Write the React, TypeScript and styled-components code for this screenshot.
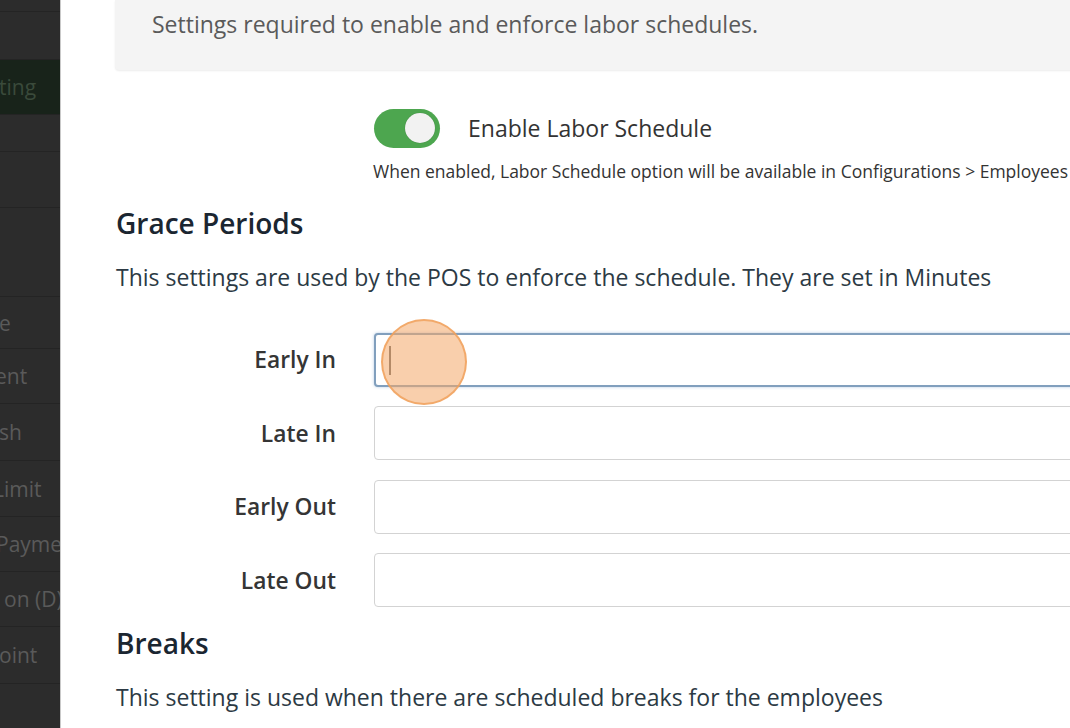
import React from "react";
import styled, { createGlobalStyle } from "styled-components";

const Global = createGlobalStyle`
  html, body { margin: 0; padding: 0; background: #fff; overflow: hidden; }
  body { font-family: "Open Sans", "Noto Sans", Arial, sans-serif; }
  * { box-sizing: border-box; }
`;

const Page = styled.div`
  display: flex;
  width: 1070px;
  height: 728px;
  overflow: hidden;
`;

const Sidebar = styled.nav`
  flex: 0 0 61px;
  width: 61px;
  height: 100%;
  background: #2c2c2c;
  border-right: 1px solid #c9c9c9;
  overflow: hidden;
`;

const SideList = styled.ul`
  list-style: none;
  margin: 0;
  padding: 0;
  display: flex;
  flex-direction: column;
`;

const SideItem = styled.li<{ $h: number; $active?: boolean }>`
  height: ${(p) => p.$h}px;
  display: flex;
  align-items: center;
  padding-left: 0;
  border-bottom: 1px solid #242424;
  background: ${(p) => (p.$active ? "#18231a" : "transparent")};
  color: ${(p) => (p.$active ? "#3a4a3b" : "#5a5a5a")};
  font-size: 21px;
  white-space: nowrap;
  overflow: hidden;
`;

const SideText = styled.span<{ $shift: number }>`
  display: inline-block;
  margin-left: ${(p) => p.$shift}px;
`;

const Main = styled.main`
  flex: 1 1 auto;
  height: 100%;
  overflow: hidden;
  padding-left: 54px;
`;

const Inner = styled.div`
  width: 1000px;
  display: flex;
  flex-direction: column;
`;

const InfoPanel = styled.div`
  background: #f4f4f4;
  border-bottom-left-radius: 4px;
  box-shadow: 0 1px 2px rgba(0, 0, 0, 0.08);
  padding: 9px 0 31px 37px;
  color: #5a5a5a;
  font-size: 23px;
  line-height: 30px;
  white-space: nowrap;
`;

const FormGrid = styled.div<{ $top: number }>`
  display: grid;
  grid-template-columns: 221px 1fr;
  column-gap: 38px;
  row-gap: 19.5px;
  margin-top: ${(p) => p.$top}px;
`;

const ToggleRow = styled.div`
  grid-column: 2;
  display: flex;
  align-items: center;
  gap: 28px;
  height: 40px;
`;

const Switch = styled.div<{ $on: boolean }>`
  width: 66px;
  height: 39px;
  border-radius: 20px;
  background: ${(p) => (p.$on ? "#4da64f" : "#ccc")};
  display: flex;
  align-items: center;
  justify-content: ${(p) => (p.$on ? "flex-end" : "flex-start")};
  padding: 0 5px;
`;

const Knob = styled.span`
  width: 30px;
  height: 30px;
  border-radius: 50%;
  background: #f2f2f2;
  box-shadow: 0 0 1px rgba(0, 0, 0, 0.3);
`;

const ToggleLabel = styled.span`
  font-size: 23px;
  color: #333;
`;

const Help = styled.div`
  grid-column: 2;
  margin-top: -8px;
  margin-left: -1px;
  font-size: 17.5px;
  line-height: 22px;
  color: #333;
  white-space: nowrap;
`;

const Heading = styled.h2<{ $top: number }>`
  margin: ${(p) => p.$top}px 0 0 1px;
  font-size: 28px;
  font-weight: 600;
  color: #1b2631;
  line-height: 36px;
`;

const Para = styled.p<{ $top: number }>`
  margin: ${(p) => p.$top}px 0 0 1px;
  font-size: 23px;
  line-height: 30px;
  color: #2c3a44;
  white-space: nowrap;
`;

const FieldRow = styled.div`
  display: contents;
`;

const Label = styled.label`
  text-align: right;
  align-self: center;
  font-size: 22.8px;
  font-weight: 600;
  color: #353535;
`;

const InputWrap = styled.div`
  position: relative;
  height: 54px;
`;

const Input = styled.input<{ $focus?: boolean }>`
  width: 100%;
  height: 100%;
  border-radius: 4px;
  border: ${(p) => (p.$focus ? "2px solid #819fbd" : "1px solid #d3d3d3")};
  box-shadow: ${(p) => (p.$focus ? "0 0 3px rgba(102, 150, 200, 0.5)" : "none")};
  background: #fff;
  font-size: 20px;
  padding: 0 15px;
  outline: none;
`;

const Caret = styled.span`
  position: absolute;
  left: 15px;
  top: 13px;
  width: 2px;
  height: 29px;
  background: #666;
`;

const ClickMark = styled.span`
  position: absolute;
  left: 7px;
  top: 50%;
  width: 86px;
  height: 86px;
  margin-top: -41px;
  border-radius: 50%;
  background: rgba(244, 168, 104, 0.55);
  border: 2px solid rgba(240, 160, 90, 0.8);
`;

const sideItems: { h: number; text: string; shift: number; active?: boolean }[] = [
  { h: 12, text: "", shift: 0 },
  { h: 48, text: "", shift: 0 },
  { h: 55, text: "ting", shift: -1, active: true },
  { h: 37, text: "", shift: 0 },
  { h: 56, text: "", shift: 0 },
  { h: 89, text: "", shift: 0 },
  { h: 52, text: "e", shift: -1 },
  { h: 55, text: "ent", shift: -5 },
  { h: 57, text: "sh", shift: -1 },
  { h: 56, text: "Limit", shift: -7 },
  { h: 55, text: "Payment", shift: -4 },
  { h: 55, text: "on (D)", shift: 4 },
  { h: 57, text: "oint", shift: -1 },
  { h: 60, text: "", shift: 0 },
];

const fields = [
  { label: "Early In", focus: true },
  { label: "Late In" },
  { label: "Early Out" },
  { label: "Late Out" },
];

export default function App() {
  return (
    <>
      <Global />
      <Page>
        <Sidebar>
          <SideList>
            {sideItems.map((it, i) => (
              <SideItem key={i} $h={it.h} $active={it.active}>
                <SideText $shift={it.shift}>{it.text}</SideText>
              </SideItem>
            ))}
          </SideList>
        </Sidebar>
        <Main>
          <Inner>
            <InfoPanel>Settings required to enable and enforce labor schedules.</InfoPanel>
            <FormGrid $top={38}>
              <ToggleRow>
                <Switch $on>
                  <Knob />
                </Switch>
                <ToggleLabel>Enable Labor Schedule</ToggleLabel>
              </ToggleRow>
              <Help>
                When enabled, Labor Schedule option will be available in Configurations &gt; Employees
              </Help>
            </FormGrid>
            <Heading $top={23}>Grace Periods</Heading>
            <Para $top={21}>This settings are used by the POS to enforce the schedule. They are set in Minutes</Para>
            <FormGrid $top={41}>
              {fields.map((f) => (
                <FieldRow key={f.label}>
                  <Label>{f.label}</Label>
                  <InputWrap>
                    <Input $focus={f.focus} readOnly />
                    {f.focus && <Caret />}
                    {f.focus && <ClickMark />}
                  </InputWrap>
                </FieldRow>
              ))}
            </FormGrid>
            <Heading $top={18}>Breaks</Heading>
            <Para $top={21}>This setting is used when there are scheduled breaks for the employees</Para>
          </Inner>
        </Main>
      </Page>
    </>
  );
}
